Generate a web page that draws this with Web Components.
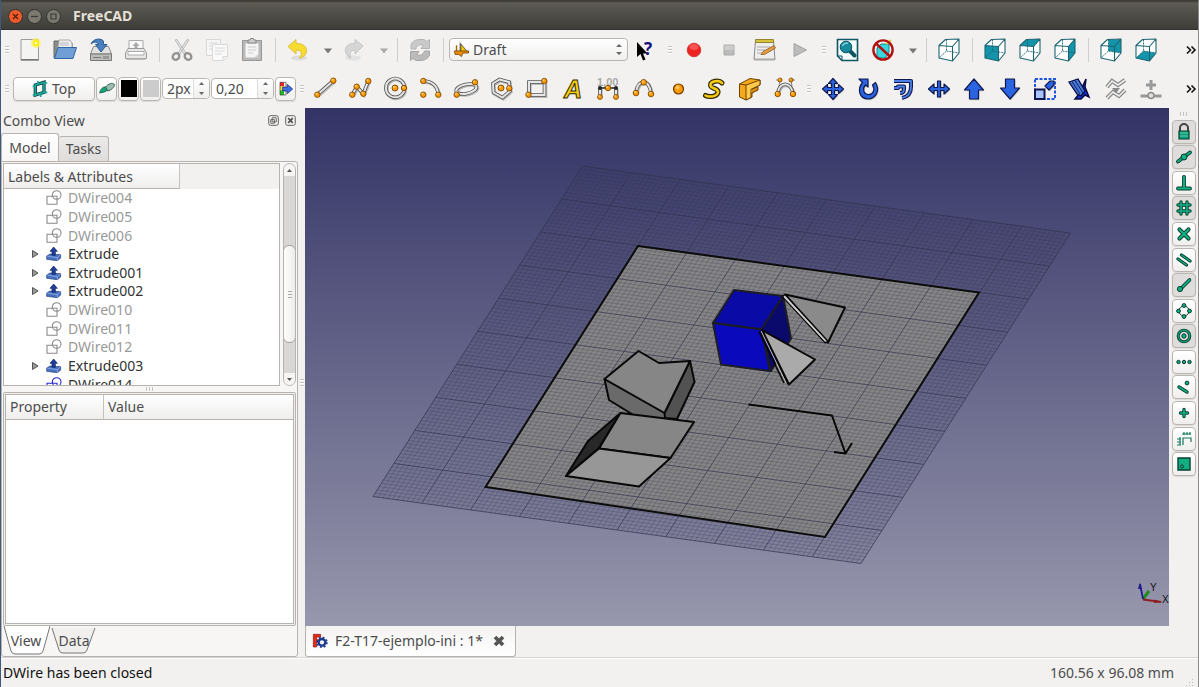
<!DOCTYPE html>
<html lang="en">
<head>
<meta charset="utf-8">
<title>FreeCAD</title>
<style>
html,body{margin:0;height:100%}
body{font:14px/18px "Noto Sans","Open Sans",sans-serif;color:#4c4c4c;background:#f2f1f0}
</style>
</head>
<body>
<cad-window></cad-window>
<script>
const define = (name, html, setup) => {
  const t = document.createElement('template');
  t.innerHTML = html;
  customElements.define(name, class extends HTMLElement {
    constructor() {
      super();
      this.attachShadow({mode: 'open'}).append(t.content.cloneNode(true));
    }
    connectedCallback() { if (setup) setup(this, this.shadowRoot); }
  });
};

/* ---- icon drawings, all on a 24x24 field ---- */
const dot = (x, y, r = 2.7) => `<circle cx="${x}" cy="${y}" r="${r}" fill="#f90" stroke="#7d4600" stroke-width=".9"/><circle cx="${x - .8}" cy="${y - .9}" r="${r * .35}" fill="#ffd98c"/>`;
const rod = d => `<path d="${d}" fill="none" stroke="#bbb" stroke-width="4" transform="translate(.8 1)"/><path d="${d}" fill="none" stroke="#555" stroke-width="3.6"/><path d="${d}" fill="none" stroke="#e6e6e6" stroke-width="2"/>`;
const blue = d => `<path d="${d}" fill="#999" opacity=".5" transform="translate(1 1.2)"/><path d="${d}" fill="#2a64e0" stroke="#10194f" stroke-width="1.2" stroke-linejoin="round"/>`;
const green = (d, w = 2) => `<g fill="none" stroke-linecap="round" stroke-linejoin="round"><path d="${d}" stroke="#063c30" stroke-width="${w + 1.8}"/><path d="${d}" stroke="#12b080" stroke-width="${w}"/></g>`;
const gdot = (x, y, r = 1.8) => `<circle cx="${x}" cy="${y}" r="${r}" fill="#12b080" stroke="#063c30"/>`;
const cube = face => `<path d="M2 7.500 8 1.500 22 1V15L15.500 23 2 20Z" fill="#fff"/>${face ? `<path d="${face}" fill="#1494ab"/>` : ''}<path d="M9.500 1.500V13L2 20M9.500 13 22 15" fill="none" stroke="#1d6470" stroke-width=".9" stroke-dasharray="2 1"/><path d="M2 7.500 8.500 1.500 22 1V15L15.500 23 2 20ZM2 7.500 15.500 8.500V23M15.500 8.500 22 1" fill="none" stroke="#1d6470" stroke-width="1.100" stroke-linejoin="round"/>`;
const ICONS = {
  new: `<path d="M3 1.500H20.500V22.500H3Z" fill="#f4f4f2" stroke="#9c9c98"/><path d="M3 21.500H20.500" stroke="#777"/><circle cx="18" cy="5" r="5" fill="#fff25c" opacity=".75"/><circle cx="18" cy="5" r="3" fill="#ffee00"/><circle cx="18" cy="5" r="1.300" fill="#fff"/>`,
  open: `<path d="M1 20V3H8L10 5H19V20Z" fill="#8b8d88" stroke="#666"/><path d="M4 16 6 2H17L19 5V16Z" fill="#eee" stroke="#999" stroke-width=".8"/><path d="M6.500 5H16M6.500 7H16" stroke="#bbb"/><path d="M1.500 20.500 5 9.500H23.500L20 20.500Z" fill="#6f9fd4" stroke="#3465a4"/>`,
  save: `<path d="M1.500 16 4.500 8.500H19.500L22.500 16Z" fill="#e2e2e0" stroke="#888"/><path d="M1.500 16H22.500V22.500H1.500Z" fill="#bcbdb9" stroke="#777"/><path d="M4 19.500H12M15 18V21M17 18V21M19 18V21" stroke="#777"/><path d="M2 6C4 1 11-.5 14.500 3V6.500H18L12 14 6.500 6.500H9.500C8 3.500 5 3.500 2 6Z" fill="#4a80bd" stroke="#2c5a92"/>`,
  print: `<path d="M5 12V2.500H19V12" fill="#f8f8f8" stroke="#aaa"/><path d="M12 4 15.500 8H13.500V11H10.500V8H8.500Z" fill="#aaa"/><path d="M1.500 15 4 10.500H20L22.500 15V20.500H1.500Z" fill="#e6e6e4" stroke="#999"/><path d="M4 13.500H20V17H4Z" fill="#fff" stroke="#aaa"/><path d="M2.500 20.500H21.500V22H2.500Z" fill="#bbb"/>`,
  cut: `<path d="M5 2 7 1.500 16 15 14 16ZM19 2 17 1.500 8 15 10 16Z" fill="#e4e4e4" stroke="#b5b5b5" stroke-width=".9"/><g fill="none" stroke="#939393" stroke-width="2.400"><ellipse cx="6" cy="18.500" rx="3" ry="3.500" transform="rotate(50 6 18.500)"/><ellipse cx="18" cy="18.500" rx="3" ry="3.500" transform="rotate(-50 18 18.500)"/></g>`,
  copy: `<g stroke="#d8d8d8" fill="#f6f6f6"><path d="M1.500 1.500H15.500V17.500H1.500Z"/><path d="M4 5H13M4 8H8M4 11H8"/><path d="M7.500 6.500H22.500V19L18.500 22.500H7.500Z" fill="#fafafa"/><path d="M10 10H20M10 13H20M10 16H17M18 22V18.500H22"/></g>`,
  paste: `<path d="M2.500 2.500H21.500V22.500H2.500Z" fill="#b8b8b8" stroke="#999"/><path d="M5 5H19V20H5Z" fill="#f4f4f4" stroke="#bbb"/><path d="M8 5V2H10L10.500.5H13.500L14 2H16V5Z" fill="#ccc" stroke="#888"/><path d="M8 9H16M8 12H16M8 15H13" stroke="#ccc"/><path d="M14 20 19 15.500V20Z" fill="#ccc"/>`,
  undo: `<ellipse cx="13" cy="20" rx="8" ry="2.500" fill="#ddd"/><path d="M2 8.500 10 1.500V5.500C17 5 21 9 20.500 13 20 18 16 20 13 20 17 16.500 16 12 10 12V16Z" fill="#f7dc30" stroke="#dcc040"/>`,
  redo: `<ellipse cx="11" cy="20" rx="8" ry="2.500" fill="#e2e2e2"/><path d="M21 8 13 1.500V5.500C6 5 3 9 3.500 13 4 17 6 19 9 20 7 16 8 12 13 12V16Z" fill="#d6d6d6" stroke="#c6c6c6"/>`,
  down: `<path d="M8 10.500H16L12 15.500Z" fill="#777"/>`,
  downoff: `<path d="M8 10.500H16L12 15.500Z" fill="#aaa"/>`,
  refresh: `<path d="M3 11V7C4 3 8 1.500 12 1.500H16L19 3.500 21.500 1.500V10.500H13L15.500 7.500C12 6 9 7 8 11Z" fill="#c9c9c9" stroke="#b4b4b4"/><path d="M21.500 13V17C20 21 16 22.500 12 22.500H8L5 20.500 2.500 22.500V13.500H11L8.500 16.500C12 18 15 17 16.500 13Z" fill="#bbb" stroke="#a6a6a6"/>`,
  draft: `<path d="M10 2V15M11 4 20 15H11Z" fill="#f5c500" stroke="#333" stroke-width="1"/><path d="M4 6H6V17H4Z" fill="#a60" /><path d="M2 14H22V17H14L12 22 8 19H3Z" fill="#f08c00" stroke="#5a3300"/>`,
  help: `<path d="M3 4V19L6.500 16 9 22.500 11.500 21.500 9 15.500H13.500Z" fill="#000"/><text x="10" y="17" font-family="Noto Sans" font-size="17" font-weight="700" fill="#11117c">?</text>`,
  record: `<circle cx="12" cy="12" r="6.800" fill="#ee2222" stroke="#c9302c" stroke-width=".8"/><ellipse cx="12" cy="9" rx="4.500" ry="3" fill="#f66" opacity=".7"/>`,
  stop: `<path d="M7 7H17V17H7Z" fill="#bbb" stroke="#aaa"/><path d="M7.500 7.500H16.500V12H7.500Z" fill="#ccc"/>`,
  macro: `<path d="M2.500 3H20.500L22 21.500H1Z" fill="#eee" stroke="#888"/><path d="M2.500 1.500H20.500V4.500H2.500Z" fill="#d7c23c" stroke="#94852a"/><path d="M4 9H17M4 12H12M4 15H12" stroke="#aaa"/><path d="M8 16.500 10 13.500 21 7.500 22.500 10 11.500 16.500Z" fill="#e79b45" stroke="#8a5a20" stroke-width=".8"/><path d="M1.500 20.500H21.500V22.500H1.500Z" fill="#aaa"/>`,
  play: `<path d="M6 5.500 18.500 12 6 18.500Z" fill="#bcbcbc" stroke="#a2a2a2"/>`,
  fit: `<path d="M1.500 1.500H21.500V22.500H6L1.500 18Z" fill="#f4fbfc" stroke="#0f5563" stroke-width="1.600"/><path d="M1.500 18H6V22.500" fill="none" stroke="#0f5563"/><path d="M13 12 18.500 17.500" stroke="#0f5563" stroke-width="4" stroke-linecap="round"/><circle cx="10" cy="9" r="5.800" fill="#178a9c" stroke="#0f5563"/><path d="M6.500 8C7 5.500 10 4.500 12 5.500" fill="none" stroke="#7fd0dc" stroke-width="1.500"/>`,
  drawstyle: `<path d="M6 10 10 6H18V15L14 20H6Z" fill="#35d6de" stroke="#188"/><path d="M15 6 20 2" stroke="#ec3" stroke-width="2"/><circle cx="12" cy="12" r="9.600" fill="none" stroke="#b01010" stroke-width="2.400"/><path d="M5 5.500 19 18.500" stroke="#b01010" stroke-width="2.400"/>`,
  iso: cube(''), front: cube('M2 7.500 15.500 8.500V23L2 20Z'), top: cube('M2 7.500 8.500 1.500 22 1 15.500 8.500Z'),
  right: cube('M15.500 8.500 22 1V15L15.500 23Z'), rear: cube('M9.500 1.500H22V15L9.500 13Z'), bottom: cube('M2 20 9.500 13 22 15 15.500 23Z'),
  more: `<path d="M5 8.500 8.500 12 5 15.500M9.500 8.500 13 12 9.500 15.500" fill="none" stroke="#111" stroke-width="1.600"/>`,
  plane: `<path d="M5 6 18 2V17L5 21Z" fill="none" stroke="#0b3f3a" stroke-width="5"/><path d="M5 6 18 2V17L5 21ZM1 8H6M16 3H23M1 21H6M16 17H23M9 0V6M13 17V24" fill="none" stroke="#18a79b" stroke-width="2.500"/>`,
  brush: `<path d="M1 18C2 12 6 8 11 9L13 13C10 17 5 17 1 18Z" fill="#15a678" stroke="#0b4535"/><path d="M10 9C14 4 20 2 23 5 24 9 18 14 13 15Z" fill="#9dbdb3" stroke="#2c5a4c" stroke-width="1.400"/>`,
  apply: `<path d="M3 2H9V8H3Z" fill="#e22"/><path d="M3 8H9V14H3Z" fill="#fd2"/><path d="M3 14H9V21H3Z" fill="#2b2"/><path d="M3 2H12V21H3Z" fill="none" stroke="#333"/><path d="M7 9H14V5L22 12 14 19V15H7Z" fill="#3c70e8" stroke="#10205c"/>`,
  line: rod('M4.300 17.700 20.300 3.700') + dot(4.3, 17.7) + dot(20.3, 3.7),
  wire: rod('M4.300 17.700 8.700 9.700 15.300 16.700 20.300 4') + dot(4.3, 17.7) + dot(8.7, 9.7) + dot(15.3, 16.7) + dot(20.3, 4),
  circle: rod('M20.500 11A9.300 9.300 0 1 1 20.500 10.900') + dot(11, 11, 3) + dot(20, 11),
  arc: rod('M4.300 4C13 4 18.500 9 19.300 17.700') + dot(4.3, 4) + dot(4.3, 17.7) + dot(19.3, 17.7),
  ellipse: `<g transform="rotate(-12 12 12)">${rod('M2 12A10.300 4.600 0 1 1 22.600 12A10.300 4.600 0 1 1 2 12')}</g>` + dot(2.7, 17.7) + dot(21, 5.3),
  polygon: rod('M9.500 2.500 19 5 20 14 12.500 20.500 3.500 15.500 3 6.500Z') + dot(11, 11, 3) + dot(19.3, 11.3),
  rect: rod('M4 5H19.500V18H4Z') + dot(3.5, 17.7) + dot(19.3, 4),
  text: `<text x="3" y="21" font-family="Liberation Sans" font-size="25" font-style="italic" font-weight="700" fill="#f8cf10" stroke="#332a00" stroke-width="1">A</text>`,
  dim: `<text x="1" y="9" font-family="Liberation Sans" font-size="11" font-weight="700" fill="#aaa">1,00</text>` + rod('M4 20V11M20 20V11') + `<path d="M3 11H21" stroke="#222" stroke-width="1.500"/><circle cx="4" cy="11" r="2" fill="#222"/><circle cx="20" cy="11" r="2" fill="#222"/>` + dot(12, 11) + dot(4, 20, 2.4) + dot(20, 20, 2.4),
  spline: rod('M4 15.500C5 7 9 5.300 11.700 5.300 15 5.300 18 9 19 16.700') + dot(4, 16, 2.8) + dot(11.7, 5.3, 2.8) + dot(19, 17, 2.8),
  point: `<circle cx="11.500" cy="12" r="5" fill="#f90" stroke="#6b3c00" stroke-width="1.200"/><circle cx="10.500" cy="10.500" r="2" fill="#ffc55c"/>`,
  shape: `<g fill="none" stroke-linecap="round"><path d="M20 6C17 2.500 8 4 8.500 8.500 9 12 17 11 16 15.500 14.500 20.500 6 20 3.500 18.500" stroke="#332a00" stroke-width="5"/><path d="M20 6C17 2.500 8 4 8.500 8.500 9 12 17 11 16 15.500 14.500 20.500 6 20 3.500 18.500" stroke="#f8cf10" stroke-width="2.600"/></g>`,
  binder: `<path d="M1.500 7 12 1.500 22 3V8L14 12V20L8 23 1.500 20Z" fill="#f5a81c" stroke="#6b4300"/><path d="M8 23V8L22 3V8L13 12.500V20.500Z" fill="#ffc94e" stroke="#6b4300"/><path d="M1.500 7 8 8M13 12.500 20 9.500V13L13 16.500" fill="#d98a10" stroke="#6b4300"/>`,
  bezier: `<path d="M3 3 7 3M18 3H22M5 16 7 3M20 16 18 3" stroke="#888"/>` + rod('M4.700 16.700C6 4 18 4 20 16.700') + dot(4.7, 17) + dot(7, 3, 2) + dot(18, 3, 2) + dot(20, 17),
  move: blue('M12 1.500 16.500 6.500H13.500V10.500H17.500V7.500L22.500 12 17.500 16.500V13.500H13.500V17.500H16.500L12 22.500 7.500 17.500H10.500V13.500H6.500V16.500L1.500 12 6.500 7.500V10.500H10.500V6.500H7.500Z'),
  rotate: blue('M3 2H12V10L9.500 8C6.500 11 7 17 12 17.500 17 18 19.500 13 16.500 8L19.500 5.500C24.500 13 20 22 12 22 3 21.500 1 12 6.500 5.500Z'),
  offset: `<g fill="none" stroke-linejoin="round"><path d="M3 4H20V10C20 17 16 20 11 21M3 11H7V9.500H13V12C13 15 11 16 9 16" stroke="#10194f" stroke-width="4"/><path d="M3 4H20V10C20 17 16 20 11 21M3 11H7V9.500H13V12C13 15 11 16 9 16" stroke="#4a80e8" stroke-width="1.800"/></g>`,
  trim: blue('M1.500 12 7 7V10.500H10.500V4H13.500V10.500H17V7L22.500 12 17 17V13.500H13.500V20H10.500V13.500H7V17Z'),
  up: blue('M12 2 21.500 13H16.500V22H7.500V13H2.500Z'),
  downg: blue('M12 22 21.500 11H16.500V2H7.500V11H2.500Z'),
  scale: `<path d="M2 2H22V22H2Z" fill="none" stroke="#1d55e0" stroke-width="2" stroke-dasharray="3 1.500"/><path d="M2 12.500H11.500V22H2Z" fill="#a9c4fa" stroke="#10194f" stroke-width="2"/>` + blue('M12 9 17 4H21V8L16 13Z'),
  edit: `<path d="M7 22 11 17 18 2 17 10 21 20 17 18 13 22Z" fill="#1230d0" stroke="#0a0a40" stroke-width="1.500"/><path d="M1 5 10 2 17 14 13 19 9 17Z" fill="#4878d8" stroke="#0a0a40" stroke-width="1.300"/><path d="M4 4.500 12 17M7 3.500 15 16" stroke="#10205c"/>`,
  w2b: `<path d="M3 10 8 4 14 8 21 3M3 21 9 15 15 19 21 13" fill="none" stroke="#888" stroke-width="4"/><path d="M3 10 8 4 14 8 21 3M3 21 9 15 15 19 21 13" fill="none" stroke="#eee" stroke-width="1.600"/><path d="M12 16 8 11H16Z" fill="#888"/>`,
  addpt: `<path d="M10.500 3H13.500V6.500H17V9.500H13.500V13H10.500V9.500H7V6.500H10.500Z" fill="#999"/><path d="M1.500 19H22.500" stroke="#999" stroke-width="3"/><circle cx="12" cy="18.500" r="3" fill="#ddd" stroke="#888" stroke-width="1.300"/>`,
  lock: `<path d="M8 11V8A4 4 0 0 1 16 8V11" fill="none" stroke="#444" stroke-width="2"/><path d="M7 11H17V19H7Z" fill="#0f9d78" stroke="#063c30" stroke-width="1.200"/><path d="M8 13H16M8 16H16" stroke="#5cd0ac"/>`,
  mid: green('M6 16.500 18 7.500', 2) + gdot(12, 12, 3), perp: green('M12 6V17M6 17.500H18', 2),
  grid: green('M9 6V18M15 6V18M6 9H18M6 15H18', 1.6), cross: green('M7.500 7.500 16.500 16.500M16.500 7.500 7.500 16.500', 2.4),
  para: green('M6 11 14.500 17M9.500 7 18 13', 1.4), end: green('M9 15.500 17.500 7', 1.8) + gdot(8, 16, 2.6),
  angle: `<circle cx="12" cy="12" r="5" fill="none" stroke="#063c30"/>` + [[12, 6.500], [17.5, 12], [12, 17.5], [6.5, 12]].map(p => gdot(p[0], p[1], 1.9)).join(''),
  center: `<circle cx="12" cy="12" r="5.800" fill="none" stroke="#063c30" stroke-width="3"/><circle cx="12" cy="12" r="5.800" fill="none" stroke="#12b080" stroke-width="1.200"/>` + gdot(12, 12, 2.2),
  ext: gdot(6.5, 12, 1.7) + gdot(12, 12, 1.7) + gdot(17.5, 12, 1.7),
  near: green('M7 12 15 17', 1.6) + gdot(15, 8, 1.9), ortho: green('M12 8.500V15.500M8.500 12H15.500', 1.6),
  sdim: `<path d="M11 18V11H19V15M8 10V18M10 7H19M12 5V8M15 5V8M18 5V8M5 12H9M5 15H9M5 18H9" fill="none" stroke="#147a5e" stroke-width="1.200"/>`,
  wp: `<path d="M6 6H18V18H6Z" fill="#12b080" stroke="#063c30" stroke-width="1.400"/><circle cx="10" cy="14.500" r="1.600" fill="none" stroke="#063c30"/>`,
  shapes: `<g fill="none" stroke="currentColor" stroke-width="1.600"><path d="M1.500 9.500H16.500V21.500H1.500Z"/><circle cx="16" cy="7.500" r="6.500"/></g>`,
  extrude: `<path d="M1 15 6 12 22 13V18L17 22 1 20Z" fill="#4a72c0" stroke="#1d3a78"/><path d="M1 15 17 17.500 22 13.500M17 17.500V22" fill="none" stroke="#9dbcf0"/><path d="M11.500 1.500 17 8H14V14H9V8H6Z" fill="#1e3f9c" stroke="#0e1f5c"/>`,
  freecad: `<path d="M2 2H13V6H7V10H12V14H7V21H2Z" fill="#e3291a" stroke="#8d150c"/><circle cx="15" cy="14" r="5" fill="#f2f1f0" stroke="#173a8c" stroke-width="3.400"/><circle cx="15" cy="14" r="7.300" fill="none" stroke="#173a8c" stroke-width="2.600" stroke-dasharray="2.900 2.830"/>`,
  closetab: `<path d="M4 4 20 20M20 4 4 20" stroke="#555" stroke-width="7.500"/>`,
  float: `<rect x="1.500" y="1.500" width="21" height="21" rx="4" fill="none" stroke="#555" stroke-width="2"/><path d="M9 6H18V15H9ZM6 10H14V18H6Z" fill="#f2f1f0" stroke="#555" stroke-width="1.800"/>`,
  close: `<rect x="1.500" y="1.500" width="21" height="21" rx="4" fill="none" stroke="#555" stroke-width="2"/><path d="M7 7 17 17M17 7 7 17" stroke="#555" stroke-width="4"/>`
};
define('cad-icon', `<style>:host{display:block;width:24px;height:24px;flex:none}svg{display:block;width:100%;height:100%;overflow:visible}</style><svg viewBox="0 0 24 24" aria-hidden="true"></svg>`,
  (el, r) => { r.querySelector('svg').innerHTML = ICONS[el.getAttribute('name')]; });

define('tool-button', `<style>:host{display:grid;width:36px;height:36px;flex:none}:host([narrow]){width:20px}
button{all:unset;display:grid;place-items:center;overflow:visible}</style><button></button>`,
  (el, r) => { const n = el.getAttribute('icon'), b = r.querySelector('button');
    b.setAttribute('aria-label', n); b.innerHTML = `<cad-icon name="${n}"></cad-icon>`; });

/* evenly spaced run of tool buttons */
define('tool-strip', `<style>:host{display:grid;grid-auto-flow:column;grid-auto-columns:1fr;flex:none}div{display:contents}tool-button{width:auto}</style><div></div>`,
  (el, r) => { r.querySelector('div').innerHTML = el.getAttribute('icons').split(' ').map(n => `<tool-button icon="${n}"></tool-button>`).join(''); });

define('tool-sep', `<style>:host{display:block;width:10px;flex:none}i{display:block;width:1px;height:24px;margin:0 auto;background:#d0cecb}</style><i></i>`);
define('tool-grip', `<style>:host{display:grid;justify-content:center;gap:2px;width:12px;flex:none}i{width:4px;height:1px;background:#c4c2be;box-shadow:0 1px #fff}
:host([upright]){width:auto;grid-auto-flow:column}:host([upright]) i{width:1px;height:4px}</style><i></i><i></i><i></i>`);

define('push-button', `<style>:host{display:block;height:24px;width:21px;flex:none}
button{box-sizing:border-box;width:100%;height:100%;margin:0;padding:0;border:1px solid #b9b6b2;border-radius:4px;background:linear-gradient(#fff,#f0efee);box-shadow:0 1px 1px #dcdad7;font:inherit;color:inherit;display:flex;align-items:center;justify-content:center;gap:4px}
:host([pressed]) button{background:#dedddc}
::slotted(cad-icon){width:16px;height:16px}</style><button><slot></slot></button>`,
  (el, r) => r.querySelector('button').setAttribute('aria-label', el.getAttribute('label') || el.textContent.trim()));

define('spin-box', `<style>:host{display:flex;box-sizing:border-box;height:21px;border:1px solid #b9b6b2;border-radius:4px;background:#fff;flex:none;overflow:hidden}
input{flex:1;min-width:0;border:0;padding:0 0 0 4px;font:inherit;color:inherit;background:none;outline:0}
div{width:15px;border-left:1px solid #ddd;background:linear-gradient(#fff,#f0efee);display:grid}
button{all:unset;display:grid;place-items:center}svg{width:5px;height:3px}</style>
<input type="text"><div><button aria-label="Increase"><svg viewBox="0 0 5 3"><path d="M0 3H5L2.500 0Z" fill="#666"/></svg></button><button aria-label="Decrease"><svg viewBox="0 0 5 3"><path d="M0 0H5L2.500 3Z" fill="#666"/></svg></button></div>`,
  (el, r) => { const i = r.querySelector('input'); i.value = el.getAttribute('value'); i.setAttribute('aria-label', el.getAttribute('label')); });

define('workbench-select', `<style>:host{display:block;position:relative;width:179px;height:23px;margin-left:1px;flex:none}
select{appearance:none;box-sizing:border-box;width:100%;height:100%;border:1px solid #b9b6b2;border-radius:4px;background:linear-gradient(#fff,#f0efee);font:inherit;color:inherit;padding:0 20px 0 23px;outline:0}
cad-icon{position:absolute;left:4px;top:3px;width:17px;height:17px;pointer-events:none}
svg{position:absolute;right:6px;top:5px;width:6px;height:13px;pointer-events:none}</style>
<select aria-label="Workbench"><option>Draft</option></select><cad-icon name="draft"></cad-icon><svg viewBox="0 0 6 13"><path d="M0 4 3 1 6 4ZM0 9 3 12 6 9Z" fill="#666"/></svg>`);

define('title-bar', `<style>:host{display:flex;align-items:center;gap:4px;height:30px;box-sizing:border-box;padding:3px 7px 0;background:linear-gradient(#3c3b37 1px,#5c5a53 3px,#3e3d38);border-bottom:1px solid #33322e}
button{all:unset;display:block;width:15px;height:15px}svg{display:block}h1{margin:0 0 0 8px;font:700 14px/18px "Noto Sans",sans-serif;color:#e4e0d8}</style>
<button aria-label="Close"><svg viewBox="0 0 15 15"><circle cx="7.500" cy="7.500" r="7" fill="#ee5a2b" stroke="#33322e"/><path d="M5 5 10 10M10 5 5 10" stroke="#5b1d0a" stroke-width="1.300"/></svg></button>
<button aria-label="Minimize"><svg viewBox="0 0 15 15"><circle cx="7.500" cy="7.500" r="7" fill="#7b7970" stroke="#33322e"/><path d="M4 7.500H11" stroke="#3c3b37" stroke-width="1.300"/></svg></button>
<button aria-label="Maximize"><svg viewBox="0 0 15 15"><circle cx="7.500" cy="7.500" r="7" fill="#7b7970" stroke="#33322e"/><path d="M5 5H10V10H5Z" fill="none" stroke="#3c3b37" stroke-width="1.200"/></svg></button>
<h1>FreeCAD</h1>`);

define('tool-bars', `<style>:host{display:block}.row{display:flex;align-items:center;height:39px}.row>.first{width:11px}.row>.end{margin-left:auto;width:16px}
.gap{display:flex;align-items:center;gap:1px;width:283px;padding-left:1px}.sw{width:16px;height:17px}
.a{width:142px}.b{width:106px}.c{width:71px}.d{width:496px}.e{width:354px}.top{width:82px}.s1{width:48px}.s2{width:63px}</style>
<div class="row" role="toolbar" aria-label="Standard"><tool-grip class="first"></tool-grip><tool-strip class="a" icons="new open save print"></tool-strip><tool-sep></tool-sep><tool-strip class="b" icons="cut copy paste"></tool-strip><tool-sep></tool-sep>
<tool-button icon="undo"></tool-button><tool-button narrow icon="down"></tool-button><tool-button icon="redo"></tool-button><tool-button narrow icon="downoff"></tool-button><tool-sep></tool-sep><tool-button icon="refresh"></tool-button><tool-sep></tool-sep>
<workbench-select></workbench-select><tool-button icon="help"></tool-button><tool-grip></tool-grip><tool-strip class="a" icons="record stop macro play"></tool-strip><tool-grip></tool-grip><tool-strip class="c" icons="fit drawstyle"></tool-strip><tool-button narrow icon="down"></tool-button><tool-sep></tool-sep>
<tool-button icon="iso"></tool-button><tool-sep></tool-sep><tool-strip class="b" icons="front top right"></tool-strip><tool-sep></tool-sep><tool-strip class="c" icons="rear bottom"></tool-strip><tool-button class="end" icon="more"></tool-button></div>
<div class="row" role="toolbar" aria-label="Draft"><tool-grip class="first"></tool-grip><div class="gap"><push-button class="top"><cad-icon name="plane"></cad-icon>Top</push-button><push-button label="Style"><cad-icon name="brush"></cad-icon></push-button>
<push-button label="Line color"><div class="sw" style="background:#000"></div></push-button><push-button label="Face color"><div class="sw" style="background:#ccc"></div></push-button>
<spin-box class="s1" value="2px" label="Line width"></spin-box><spin-box class="s2" value="0,20" label="Font size"></spin-box><push-button label="Apply style"><cad-icon name="apply"></cad-icon></push-button></div>
<tool-grip class="first"></tool-grip><tool-strip class="d" icons="line wire circle arc ellipse polygon rect text dim spline point shape binder bezier"></tool-strip><tool-grip></tool-grip>
<tool-strip class="e" icons="move rotate offset trim up downg scale edit w2b addpt"></tool-strip><tool-button class="end" icon="more"></tool-button></div>`);

define('tree-item', `<style>:host{display:flex;align-items:center;padding-left:27px;color:#333}:host([hidden-part]){color:#999}
span{width:8px;flex:none}span svg{display:block}cad-icon{width:16px;height:16px}div{margin:0 6px 0 7px}:host([blue]) cad-icon{color:#2424e0}:host([hidden-part]) cad-icon{color:#888}</style>
<span></span><div></div><slot></slot>`,
  (el, r) => { const ex = el.hasAttribute('branch');
    r.querySelector('div').innerHTML = `<cad-icon name="${ex ? 'extrude' : 'shapes'}"></cad-icon>`;
    if (ex) r.querySelector('span').innerHTML = `<svg width="8" height="8" viewBox="0 0 8 8"><path d="M1.500.5 7 4 1.500 7.500Z" fill="#999" stroke="#555"/></svg>`; });

define('model-tree', `<style>:host{display:flex;height:224px;box-sizing:border-box;flex:none;padding:1px 0 0 1px;gap:3px}
.list{flex:1;border:1px solid #b6b3af;background:#fff;overflow:hidden;min-width:0}
.head{display:flex;height:25px;background:#f2f1f0}.head span{box-sizing:border-box;width:176px;padding:4px;background:linear-gradient(#fff,#efeeed);border-right:1px solid #c4c2be;border-bottom:1px solid #b6b3af}
.items{display:grid;grid-template-rows:repeat(11,1fr);height:205px}
.bar{width:13px;box-sizing:border-box;border:1px solid #b6b3af;border-radius:7px;background:#d9d7d5;display:flex;flex-direction:column;margin-right:1px;overflow:hidden}
.bar button{all:unset;display:grid;place-items:center;height:12px;background:#f6f5f4}.bar i{display:block;box-sizing:border-box;flex:0 0 98px;margin:69px -1px auto;border:1px solid #a5a29e;border-radius:6px;background:linear-gradient(90deg,#fff,#ececea);display:grid;place-content:center;gap:2px}
.bar i b{width:4px;height:1px;background:#aaa}</style>
<div class="list"><div class="head"><span>Labels &amp; Attributes</span></div><div class="items">
<tree-item hidden-part>DWire004</tree-item><tree-item hidden-part>DWire005</tree-item><tree-item hidden-part>DWire006</tree-item>
<tree-item branch>Extrude</tree-item><tree-item branch>Extrude001</tree-item><tree-item branch>Extrude002</tree-item>
<tree-item hidden-part>DWire010</tree-item><tree-item hidden-part>DWire011</tree-item><tree-item hidden-part>DWire012</tree-item>
<tree-item branch>Extrude003</tree-item><tree-item blue>DWire014</tree-item></div></div>
<div class="bar"><button aria-label="Scroll up"><svg width="5" height="3"><path d="M0 3H5L2.500 0Z" fill="#555"/></svg></button><i><b></b><b></b><b></b></i><button aria-label="Scroll down"><svg width="5" height="3"><path d="M0 0H5L2.500 3Z" fill="#555"/></svg></button></div>`);

define('property-view', `<style>:host{display:flex;flex-direction:column;flex:1;min-height:0}
.frame{flex:1;margin:0 1px;padding:1px;border:1px solid #b6b3af;border-radius:2px;background:#f2f1f0;min-height:0}
.in{box-sizing:border-box;height:100%;border:1px solid #b6b3af;background:#fff}
table{width:100%;border-collapse:collapse;table-layout:fixed}th{font-weight:400;text-align:left;height:24px;padding:0 4px;background:linear-gradient(#fff,#efeeed);border-bottom:1px solid #b6b3af}th:first-child{width:89px;border-right:1px solid #c4c2be}
.tabs{display:flex;height:30px}button{position:relative;border:0;background:none;padding:0;font:inherit;color:inherit;width:48px;height:29px}
svg{position:absolute;inset:0}span{position:relative}</style>
<div class="frame"><div class="in"><table><thead><tr><th>Property</th><th>Value</th></tr></thead></table></div></div>
<div class="tabs" role="tablist"><button role="tab"><svg width="48" height="29"><path d="M2 0 9 25Q10 28 13 28H37Q40 28 41 25L48 0" fill="#fff" stroke="#777"/></svg><span>View</span></button>
<button role="tab"><svg width="48" height="29"><path d="M2 2 9 24Q10 27 13 27H33Q36 27 37 24L45 2" fill="#f0efee" stroke="#777"/></svg><span>Data</span></button></div>`);

define('combo-view', `<style>:host{display:flex;flex-direction:column;width:297px;flex:none}
header{display:flex;align-items:center;height:25px;padding:0 2px;gap:6px}h2{font:inherit;margin:0 auto 0 0}header button{all:unset}header cad-icon{width:11px;height:11px}
.tabs{display:flex;align-items:flex-end;height:28px}.tabs button{box-sizing:border-box;font:inherit;color:inherit;margin:0;padding:0;border:1px solid #b6b3af;border-bottom:0;border-radius:3px 3px 0 0}
.on{width:58px;height:28px;background:linear-gradient(#fff,#f7f6f5)}.off{width:50px;height:25px;background:linear-gradient(#eceae8,#dfdddb);border-left-width:0!important}
.pane{flex:1;display:flex;flex-direction:column;min-height:0;border:1px solid #b6b3af;border-radius:0 3px 3px 3px;background:#f7f6f5}
tool-grip{height:6px;align-content:center}</style>
<header><h2>Combo View</h2><button aria-label="Float"><cad-icon name="float"></cad-icon></button><button aria-label="Close"><cad-icon name="close"></cad-icon></button></header>
<div class="tabs" role="tablist"><button class="on" role="tab">Model</button><button class="off" role="tab">Tasks</button></div>
<div class="pane"><model-tree></model-tree><tool-grip upright></tool-grip><property-view></property-view></div>`);

/* 3D scene: working-plane grid, sheet, solids and axis cross */
const gridPath = (n, skip) => {
  let d = '';
  for (let i = 0; i <= n; i++) {
    if (skip && i % 10 === 0) continue;
    const t = i / n, f = v => v.toFixed(2);
    d += `M${f(582.5 - 209.5 * t)} ${f(166 + 330.5 * t)}l488 67M${f(582.5 + 488 * t)} ${f(166 + 67 * t)}l-209.5 330.5`;
  }
  return d;
};
define('scene-view', `<style>:host{display:block;flex:1;min-height:0;overflow:hidden;background:linear-gradient(#333366,#9797ad)}svg{display:block;width:100%;height:100%}
text{font:10px "Liberation Sans",sans-serif;fill:#111}</style>
<svg viewBox="305 108 864 518" preserveAspectRatio="xMidYMid slice" role="img" aria-label="3D view">
<path d="M582.500 166 1070.500 233 861 563.500 373 496.500Z" fill="#3a3a58" opacity=".1"/>
<path d="M638 246 979 292.500 825 537 485.500 487Z" fill="#858585"/>
<path d="${gridPath(100, true)}" fill="none" stroke="#32324f" stroke-width=".6" opacity=".42"/>
<path d="${gridPath(10)}" fill="none" stroke="#32324f" stroke-width="1" opacity=".7"/>
<path d="M638 246 979 292.500 825 537 485.500 487Z" fill="none" stroke="#0c0c0c" stroke-width="2"/>
<g stroke="#1c1c24" stroke-width="2" stroke-linejoin="round"><path d="M734 290 783 296 761.500 329.500 713 323Z" fill="#0a0aa6"/><path d="M783 296 791 338.500 771 371 761.500 329.500Z" fill="#0a0a6c"/><path d="M713 323 761.500 329.500 770 371 721 364.500Z" fill="#0a0abc"/></g>
<g stroke="#080808" stroke-width="2" stroke-linejoin="round">
<path d="M785 294.500 845 307.500 828 342.500Z" fill="#8a8a8a"/><path d="M785 294.500 828.500 342 825 342.500 782.500 296.500Z" fill="#ccc" stroke-width="1.500"/><path d="M784.500 297 825.500 341" stroke="#ccc" stroke-width="1.500"/>
<path d="M762 330 815 359.500 789 384.500Z" fill="#aaa"/><path d="M761.500 331 786.500 383" fill="none" stroke="#ccc" stroke-width="1.400"/><path d="M759 331.500 784 383M762 330 788 384" fill="none" stroke-width="1.600"/>
<path d="M604.500 379 665 413V419H640L609 400Z" fill="#6a6a6a"/><path d="M690 361 694.500 382 677 419 665 418 664.500 413Z" fill="#525252"/><path d="M638.500 351 659 363 690 361 664.500 413 604.500 379Z" fill="#868686"/>
<path d="M620.500 413 588 441 566 476 599 448Z" fill="#282828"/><path d="M620.500 413 694 422 670.500 458 599 448.500Z" fill="#868686"/><path d="M599 448.500 670.500 458 639 486.500 566 476Z" fill="#979797"/>
<path d="M748.500 404.500 832 415.500 845.500 453.500M834 452 845.500 453.500 852 443" fill="none"/></g>
<g fill="none" stroke-width="1.800"><path d="M1143 599 1149 591" stroke="#1e8c1e" stroke-width="3"/><path d="M1143 599 1140 584" stroke="#1e1e90"/><path d="M1143 599.500 1161 602" stroke="#8c1e1e"/></g>
<path d="M1138 589 1139.500 583 1142 589Z" fill="#1e1e90"/><path d="M1154 599.500 1162 602 1154 603Z" fill="#8c1e1e"/>
<text x="1150" y="591">Y</text><text x="1162" y="603">X</text></svg>`);

define('document-area', `<style>:host{display:flex;flex-direction:column;flex:1;min-width:0}
.tabs{display:flex;height:31px}.tab{box-sizing:border-box;display:flex;align-items:center;width:211px;height:31px;padding:0 10px 0 6px;border:1px solid #b6b3af;border-top:0;border-radius:0 0 3px 3px;background:linear-gradient(#f4f3f2,#fff)}
.tab button{all:unset}.tab>button:first-of-type{flex:1;white-space:nowrap;margin-left:7px}cad-icon{width:16px;height:16px}.x{width:12px;height:12px}</style>
<scene-view></scene-view><div class="tabs" role="tablist"><div class="tab"><cad-icon name="freecad"></cad-icon><button role="tab">F2-T17-ejemplo-ini : 1*</button><button aria-label="Close tab"><cad-icon class="x" name="closetab"></cad-icon></button></div></div>`);

define('snap-bar', `<style>:host{display:block;width:29px;flex:none}tool-grip{height:11px;align-content:center}
.col{display:grid;grid-template-rows:repeat(14,1fr);justify-content:center;align-items:center;height:358px}push-button{width:24px;height:24px}push-button cad-icon{width:24px;height:24px}</style>
<tool-grip upright></tool-grip><div class="col"></div>`,
  (el, r) => { r.querySelector('.col').innerHTML = 'lock mid perp grid cross para end angle center ext near ortho sdim wp'.split(' ').map(n => `<push-button label="Snap ${n}"${['lock', 'mid', 'grid', 'end', 'center'].includes(n) ? ' pressed' : ''}><cad-icon name="${n}"></cad-icon></push-button>`).join(''); });

define('status-bar', `<style>:host{display:flex;align-items:center;justify-content:space-between;box-sizing:border-box;height:30px;padding:0 3px 0 2px;border-top:1px solid #d6d4d1;box-shadow:inset 0 1px #fff}
b{font-weight:400;color:#111}span{margin-left:auto;margin-right:11px}i{align-self:flex-end;width:10px;height:12px;background:radial-gradient(circle,#bbb 1px,transparent 1px) 0 0/3px 3px;clip-path:polygon(100% 0,100% 100%,0 100%)}</style>
<b>DWire has been closed</b><span>160.56 x 96.08 mm</span><i></i>`);

define('cad-window', `<style>:host{display:flex;flex-direction:column;box-sizing:border-box;height:100vh;min-height:600px;border-left:1px solid #41597c;border-right:1px solid #8a8a8a;background:#f2f1f0}
main{display:flex;flex:1;min-height:0}.split{width:7px;display:grid;align-content:center;justify-content:center}</style>
<title-bar></title-bar><tool-bars></tool-bars><main><combo-view></combo-view><div class="split"><tool-grip></tool-grip></div><document-area></document-area><snap-bar></snap-bar></main><status-bar></status-bar>`);
</script>
</body>
</html>
